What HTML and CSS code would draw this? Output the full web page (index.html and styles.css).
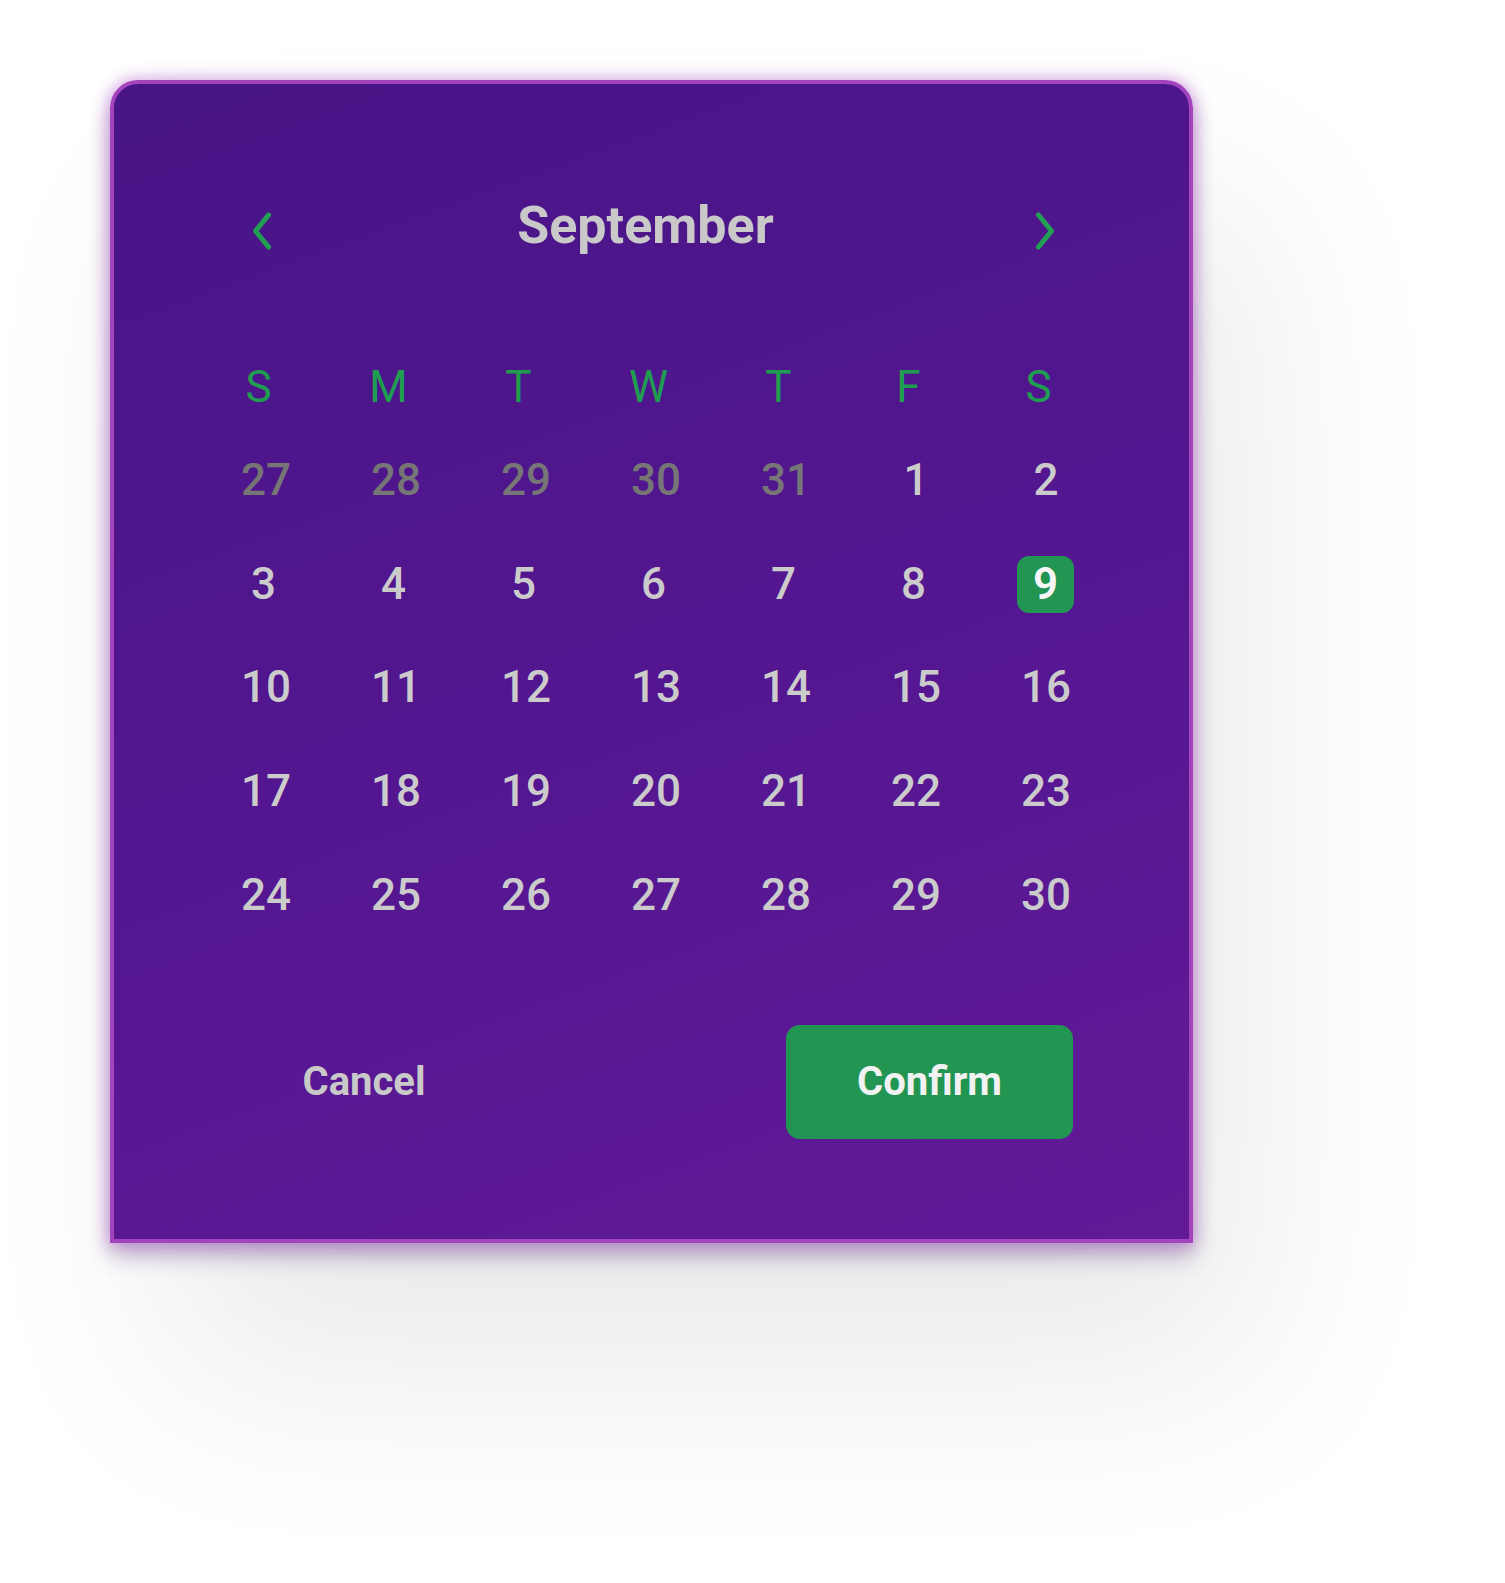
FILE: index.html
```html
<!DOCTYPE html>
<html lang="en">
<head>
<meta charset="utf-8">
<title>Date picker</title>
<link rel="stylesheet" href="styles.css">
</head>
<body>
<div class="stage">
  <div class="card">
    <div class="header">
      <button class="nav" aria-label="Previous month">
        <svg width="20" height="38" viewBox="0 0 20 38"><path d="M16.5 3 L3.5 19 L16.5 35" fill="none" stroke="#21a052" stroke-width="5" stroke-linecap="round" stroke-linejoin="round"/></svg>
      </button>
      <div class="title">September</div>
      <button class="nav" aria-label="Next month">
        <svg width="20" height="38" viewBox="0 0 20 38"><path d="M3.5 3 L16.5 19 L3.5 35" fill="none" stroke="#21a052" stroke-width="5" stroke-linecap="round" stroke-linejoin="round"/></svg>
      </button>
    </div>

    <div class="weekdays">
      <div class="wd">S</div><div class="wd">M</div><div class="wd">T</div><div class="wd">W</div><div class="wd">T</div><div class="wd">F</div><div class="wd">S</div>
    </div>

    <div class="days">
      <div class="day muted">27</div><div class="day muted">28</div><div class="day muted">29</div><div class="day muted">30</div><div class="day muted">31</div><div class="day">1</div><div class="day">2</div>
      <div class="day single">3</div><div class="day single">4</div><div class="day single">5</div><div class="day single">6</div><div class="day single">7</div><div class="day single">8</div><div class="day"><span class="selected">9</span></div>
      <div class="day">10</div><div class="day">11</div><div class="day">12</div><div class="day">13</div><div class="day">14</div><div class="day">15</div><div class="day">16</div>
      <div class="day">17</div><div class="day">18</div><div class="day">19</div><div class="day">20</div><div class="day">21</div><div class="day">22</div><div class="day">23</div>
      <div class="day">24</div><div class="day">25</div><div class="day">26</div><div class="day">27</div><div class="day">28</div><div class="day">29</div><div class="day">30</div>
    </div>

    <div class="footer">
      <button class="btn btn-cancel">Cancel</button>
      <button class="btn btn-confirm">Confirm</button>
    </div>
  </div>
</div>
</body>
</html>
```

FILE: styles.css
```css
* { box-sizing: border-box; }

html, body {
  margin: 0;
  padding: 0;
  background: #ffffff;
  font-family: Roboto, "Liberation Sans", Arial, sans-serif;
}

.stage {
  padding: 80px 0 0 110px;
  height: 1583px;
}

.card {
  width: 1083px;
  height: 1163px;
  border: 4px solid #a444bd;
  border-radius: 28px 28px 0 0;
  background: linear-gradient(160deg, #481586 0%, #531690 50%, #621a97 100%);
  box-shadow:
    0 0 16px 2px rgba(170, 70, 200, 0.45),
    0 14px 22px rgba(70, 30, 110, 0.30),
    60px 130px 200px rgba(0, 0, 0, 0.085);
  padding-top: 107px;
}

.header {
  display: flex;
  align-items: center;
  height: 80px;
  padding: 0 134px 0 138px;
}

.nav {
  display: flex;
  align-items: center;
  justify-content: center;
  width: 20px;
  height: 38px;
  padding: 0;
  margin: 0;
  border: 0;
  background: none;
  cursor: pointer;
}

.nav svg { display: block; }

.title {
  flex: 1;
  align-self: flex-start;
  text-align: center;
  margin-right: 16px;
  font-size: 52px;
  font-weight: 700;
  line-height: 70px;
  color: #c9c9c9;
}

.weekdays,
.days {
  display: grid;
  grid-template-columns: repeat(7, 130px);
  margin-left: 87px;
}

.weekdays { margin-top: 75.6px; }

.days { margin-top: 1.5px; }

.wd {
  text-align: center;
  padding-right: 15px;
  font-size: 44px;
  font-weight: 400;
  line-height: 80px;
  color: #1f9e50;
}

.day {
  display: flex;
  align-items: center;
  justify-content: center;
  height: 103.7px;
  font-size: 44px;
  font-weight: 500;
  color: #cbcbcb;
}

.day.single { padding-right: 5px; }

.day.muted { color: #767676; }

.selected {
  display: flex;
  align-items: center;
  justify-content: center;
  width: 57px;
  height: 57px;
  border-radius: 12px;
  background: #229553;
  color: #f7f7f7;
  font-weight: 600;
  margin-left: -1px;
  margin-top: 1px;
}

.footer {
  display: flex;
  justify-content: space-between;
  margin-top: 78px;
  padding: 0 116px 0 106.5px;
}

.btn {
  width: 287px;
  height: 114px;
  border: 0;
  border-radius: 14px;
  padding: 0;
  font-family: Roboto, "Liberation Sans", Arial, sans-serif;
  font-size: 40px;
  font-weight: 700;
  line-height: 114px;
  cursor: pointer;
}

.btn-cancel {
  background: transparent;
  color: #c9c9c9;
}

.btn-confirm {
  background: #229553;
  color: #f2f2f2;
}
```
